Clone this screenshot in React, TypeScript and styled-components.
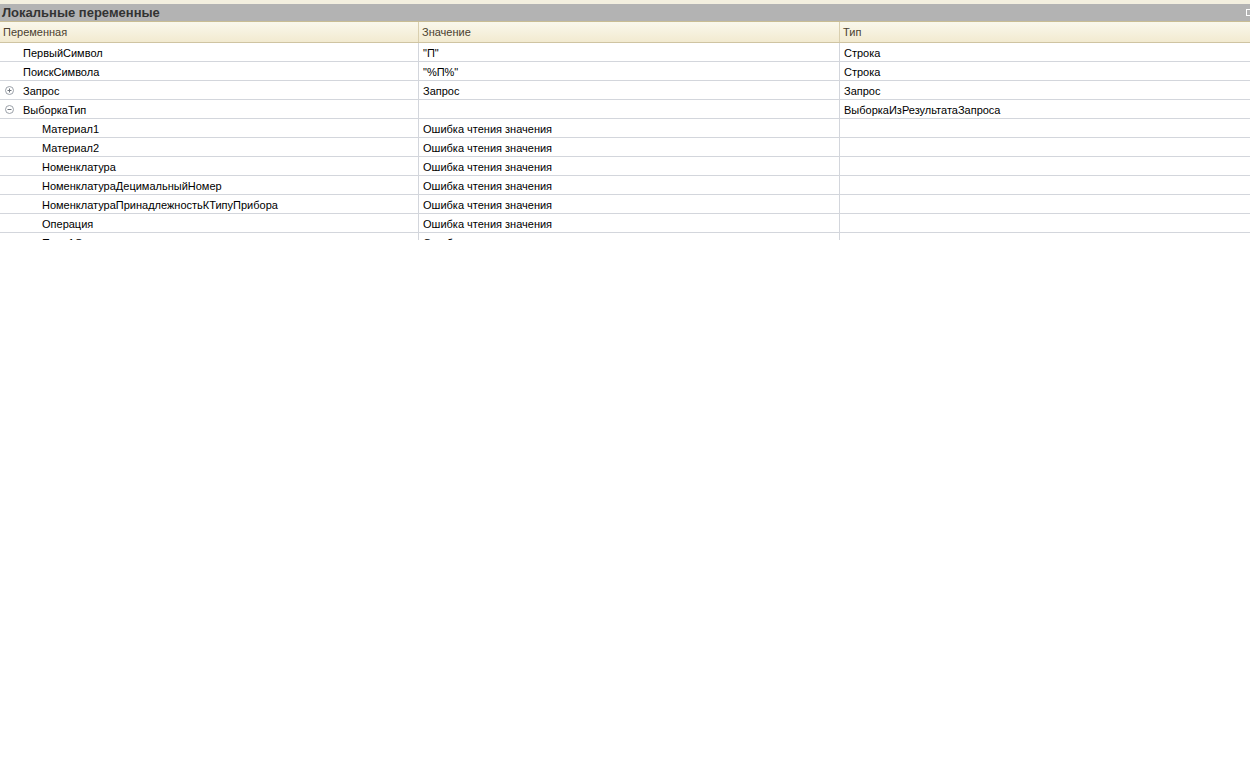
import styled, { createGlobalStyle } from 'styled-components'

const Global = createGlobalStyle`
  html, body { margin: 0; padding: 0; background: #fff; }
  body { font-family: "Liberation Sans", Arial, sans-serif; font-size: 11px; }
`

type Row = { name: string; value?: string; type?: string; level: number; toggle?: 'plus' | 'minus' }

const rows: Row[] = [
  { name: 'ПервыйСимвол', value: '"П"', type: 'Строка', level: 0 },
  { name: 'ПоискСимвола', value: '"%П%"', type: 'Строка', level: 0 },
  { name: 'Запрос', value: 'Запрос', type: 'Запрос', level: 0, toggle: 'plus' },
  { name: 'ВыборкаТип', value: '', type: 'ВыборкаИзРезультатаЗапроса', level: 0, toggle: 'minus' },
  { name: 'Материал1', value: 'Ошибка чтения значения', level: 1 },
  { name: 'Материал2', value: 'Ошибка чтения значения', level: 1 },
  { name: 'Номенклатура', value: 'Ошибка чтения значения', level: 1 },
  { name: 'НоменклатураДецимальныйНомер', value: 'Ошибка чтения значения', level: 1 },
  { name: 'НоменклатураПринадлежностьКТипуПрибора', value: 'Ошибка чтения значения', level: 1 },
  { name: 'Операция', value: 'Ошибка чтения значения', level: 1 },
  { name: 'Поле1Сортировки', value: 'Ошибка чтения значения', level: 1 },
]

const Panel = styled.div`
  width: 1250px;
  height: 759px;
  background: #fff;
  border-top: 4px solid #f3efdf;
  box-sizing: border-box;
`

const TitleBar = styled.div`
  height: 17px;
  background: #b3b3b3;
  border-bottom: 1px solid #c9bd94;
  display: flex;
  align-items: center;
  justify-content: space-between;
  padding-left: 2px;
  font-weight: bold;
  font-size: 13px;
  color: #333;
  overflow: hidden;
`

const Pin = styled.span`
  width: 5px;
  height: 7px;
  border: 1px solid #fff;
  border-right: none;
  margin-right: -1px;
  box-sizing: border-box;
`

const Grid = styled.div`
  height: 218px;
  overflow: hidden;
`

const Cols = `
  display: grid;
  grid-template-columns: 419px 421px 1fr;
`

const Header = styled.div`
  ${Cols}
  height: 20px;
  background: linear-gradient(#faf8ec, #f2ead0);
  border-bottom: 1px solid #cfc4a2;
  color: #4a4030;
`

const HeadCell = styled.div<{ $last?: boolean }>`
  display: flex;
  align-items: center;
  padding-left: 3px;
  border-right: ${p => (p.$last ? 'none' : '1px solid #d9cfaf')};
`

const Line = styled.div`
  ${Cols}
  height: 18px;
  border-bottom: 1px solid #d3d6dc;
  color: #000;
`

const Cell = styled.div<{ $indent?: number; $last?: boolean }>`
  display: flex;
  align-items: center;
  padding-left: ${p => p.$indent ?? 4}px;
  padding-top: 2px;
  border-right: ${p => (p.$last ? 'none' : '1px solid #d3d6dc')};
  white-space: nowrap;
  overflow: hidden;
  position: relative;
`

const Toggle = styled.span`
  position: absolute;
  left: 5px;
  top: 5px;
  width: 7px;
  height: 7px;
  border: 1px solid #9aa0a8;
  border-radius: 50%;
  display: flex;
  align-items: center;
  justify-content: center;
`

const ToggleIcon = ({ kind }: { kind: 'plus' | 'minus' }) => (
  <Toggle>
    <svg width="7" height="7" viewBox="0 0 7 7">
      <path d="M1.5 3.5h4" stroke="#6f757d" strokeWidth="1" />
      {kind === 'plus' && <path d="M3.5 1.5v4" stroke="#6f757d" strokeWidth="1" />}
    </svg>
  </Toggle>
)

export default function App() {
  return (
    <Panel>
      <Global />
      <TitleBar>
        <span>Локальные переменные</span>
        <Pin />
      </TitleBar>
      <Grid>
        <Header>
          <HeadCell>Переменная</HeadCell>
          <HeadCell>Значение</HeadCell>
          <HeadCell $last>Тип</HeadCell>
        </Header>
        {rows.map(r => (
          <Line key={r.name}>
            <Cell $indent={r.level === 0 ? 23 : 42}>
              {r.toggle && <ToggleIcon kind={r.toggle} />}
              {r.name}
            </Cell>
            <Cell>{r.value}</Cell>
            <Cell $last>{r.type}</Cell>
          </Line>
        ))}
      </Grid>
    </Panel>
  )
}
